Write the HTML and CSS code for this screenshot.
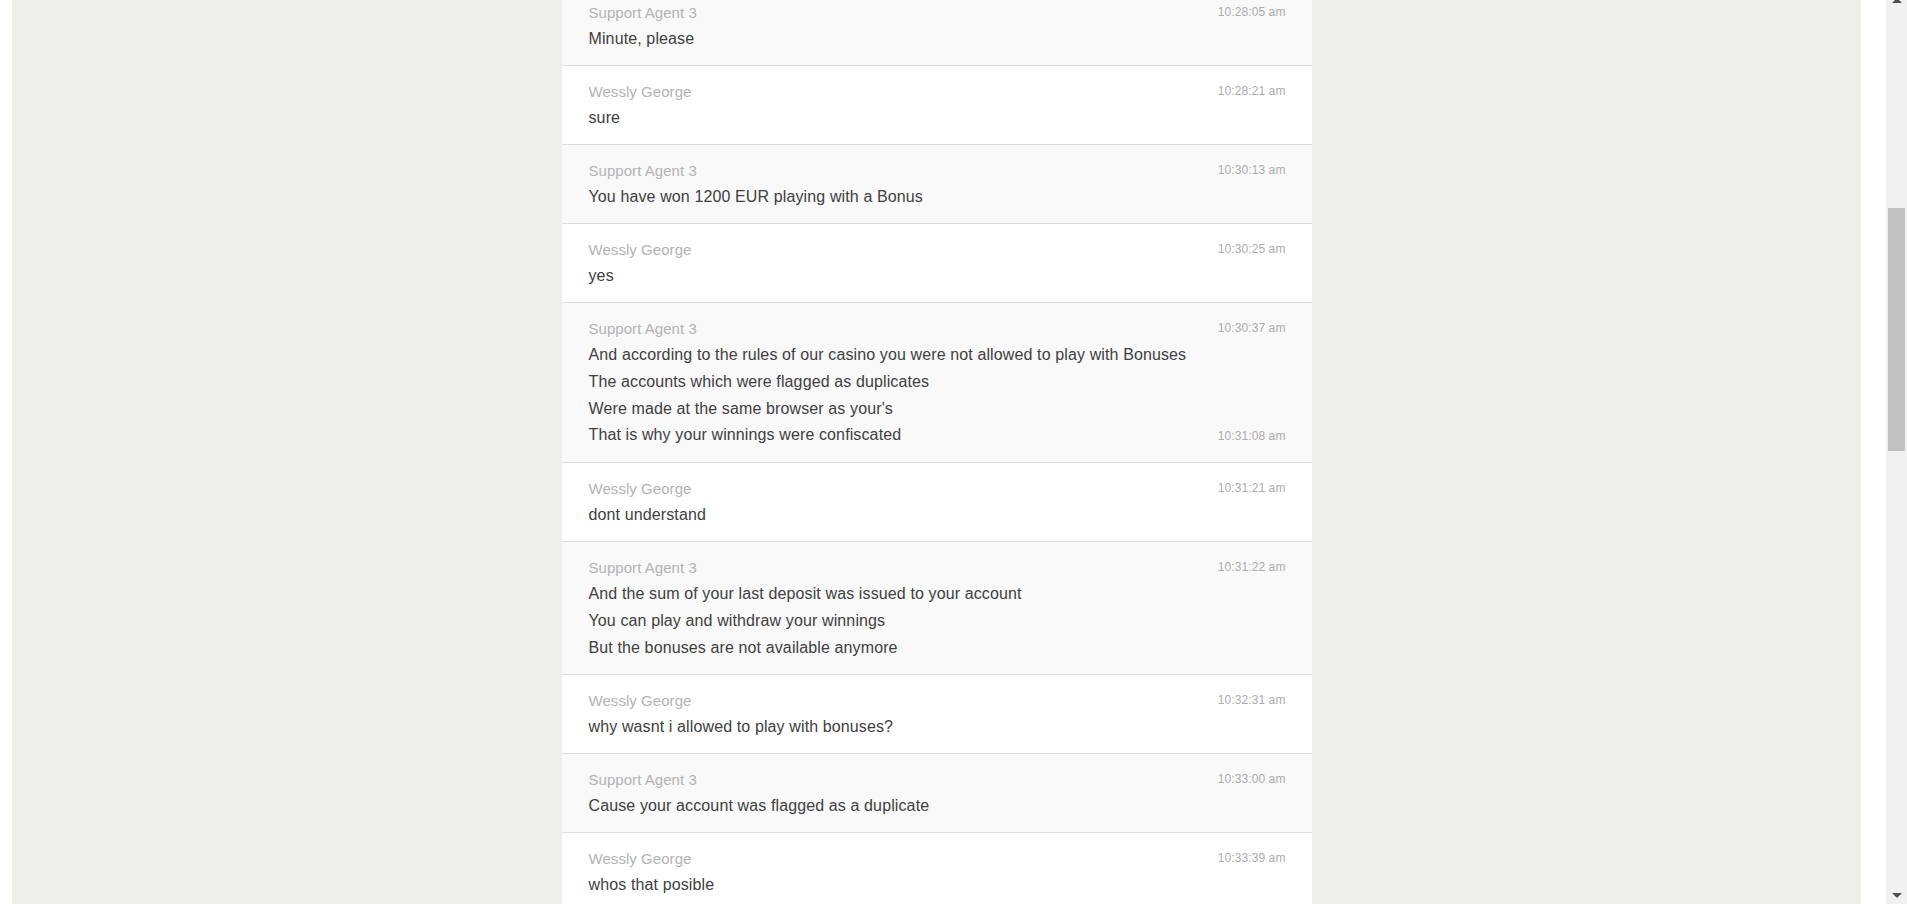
FILE: index.html
```html
<!DOCTYPE html>
<html>
<head>
<meta charset="utf-8">
<title>Chat transcript</title>
<link rel="stylesheet" href="styles.css">
</head>
<body>
<div class="page">
  <div class="canvas">
    <div class="chat">
      <div class="msg agent">
        <div class="head"><span class="name">Support Agent 3</span><span class="time">10:28:05 am</span></div>
        <div class="line"><span class="text">Minute, please</span></div>
      </div>
      <div class="msg user">
        <div class="head"><span class="name">Wessly George</span><span class="time">10:28:21 am</span></div>
        <div class="line"><span class="text">sure</span></div>
      </div>
      <div class="msg agent">
        <div class="head"><span class="name">Support Agent 3</span><span class="time">10:30:13 am</span></div>
        <div class="line"><span class="text">You have won 1200 EUR playing with a Bonus</span></div>
      </div>
      <div class="msg user">
        <div class="head"><span class="name">Wessly George</span><span class="time">10:30:25 am</span></div>
        <div class="line"><span class="text">yes</span></div>
      </div>
      <div class="msg agent">
        <div class="head"><span class="name">Support Agent 3</span><span class="time">10:30:37 am</span></div>
        <div class="line"><span class="text">And according to the rules of our casino you were not allowed to play with Bonuses</span></div>
        <div class="line"><span class="text">The accounts which were flagged as duplicates</span></div>
        <div class="line"><span class="text">Were made at the same browser as your's</span></div>
        <div class="line"><span class="text">That is why your winnings were confiscated</span><span class="time">10:31:08 am</span></div>
      </div>
      <div class="msg user">
        <div class="head"><span class="name">Wessly George</span><span class="time">10:31:21 am</span></div>
        <div class="line"><span class="text">dont understand</span></div>
      </div>
      <div class="msg agent">
        <div class="head"><span class="name">Support Agent 3</span><span class="time">10:31:22 am</span></div>
        <div class="line"><span class="text">And the sum of your last deposit was issued to your account</span></div>
        <div class="line"><span class="text">You can play and withdraw your winnings</span></div>
        <div class="line"><span class="text">But the bonuses are not available anymore</span></div>
      </div>
      <div class="msg user">
        <div class="head"><span class="name">Wessly George</span><span class="time">10:32:31 am</span></div>
        <div class="line"><span class="text">why wasnt i allowed to play with bonuses?</span></div>
      </div>
      <div class="msg agent">
        <div class="head"><span class="name">Support Agent 3</span><span class="time">10:33:00 am</span></div>
        <div class="line"><span class="text">Cause your account was flagged as a duplicate</span></div>
      </div>
      <div class="msg user">
        <div class="head"><span class="name">Wessly George</span><span class="time">10:33:39 am</span></div>
        <div class="line"><span class="text">whos that posible</span></div>
      </div>
    </div>
  </div>
  <div class="scrollbar">
    <div class="arrow up"></div>
    <div class="track"><div class="thumb"></div></div>
    <div class="arrow down"></div>
  </div>
</div>
</body>
</html>
```

FILE: styles.css
```css
html, body {
  margin: 0;
  padding: 0;
  height: 904px;
  overflow: hidden;
  background: #ffffff;
  font-family: "Liberation Sans", Arial, sans-serif;
}

.page {
  display: flex;
  height: 904px;
}

.canvas {
  flex: 1;
  display: flex;
  justify-content: center;
  background: #efefea;
  margin: 0 25px 0 12px;
  overflow: hidden;
}

.chat {
  width: 750px;
  margin-top: -14px;
  align-self: flex-start;
}

.msg {
  border-top: 1px solid #dddddd;
  padding: 16px 26px 12.2px 27px;
}

.msg.agent {
  background: #f9f9f9;
}

.msg.user {
  background: #ffffff;
}

.head {
  display: flex;
  justify-content: space-between;
  align-items: flex-start;
  margin-bottom: 3px;
}

.name {
  font-size: 15px;
  line-height: 20px;
  color: #b3b3b3;
  letter-spacing: 0.05px;
}

.time {
  font-size: 12px;
  line-height: 18px;
  color: #ababab;
  white-space: nowrap;
  letter-spacing: 0.1px;
}

.line {
  display: flex;
  justify-content: space-between;
  align-items: baseline;
  font-size: 16px;
  line-height: 26.8px;
  color: #404040;
  letter-spacing: 0.12px;
}

.line .time {
  line-height: 26.8px;
}

.scrollbar {
  width: 21px;
  flex: none;
  background: #f1f1f1;
  display: flex;
  flex-direction: column;
  align-items: center;
}

.arrow {
  width: 0;
  height: 0;
  border-left: 5px solid transparent;
  border-right: 5px solid transparent;
  flex: none;
}

.arrow.up {
  border-bottom: 5px solid #505050;
  margin-top: -2px;
}

.arrow.down {
  border-top: 5px solid #505050;
  margin-bottom: 6px;
}

.track {
  flex: 1;
  width: 100%;
  display: flex;
  justify-content: center;
}

.thumb {
  width: 17px;
  height: 243px;
  margin-top: 205px;
  background: #c1c1c1;
}
```
